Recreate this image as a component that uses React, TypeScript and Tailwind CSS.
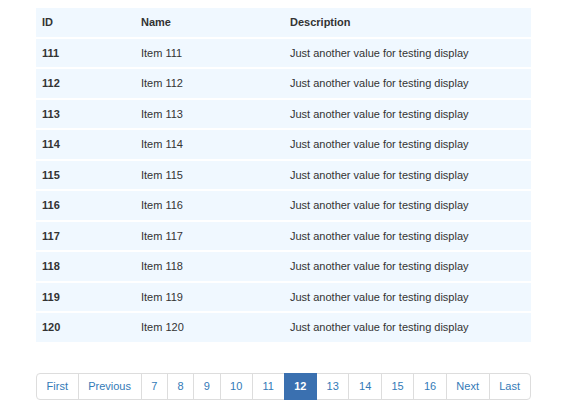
const rows = Array.from({ length: 10 }, (_, i) => 111 + i);

const pages = ["First", "Previous", "7", "8", "9", "10", "11", "12", "13", "14", "15", "16", "Next", "Last"];

export default function App() {
  return (
    <div className="min-h-screen bg-white pt-2 text-[11px] text-[#333] font-['Liberation_Sans',Arial,sans-serif]">
      <div className="ml-[36px] w-[495px]">
        <div className="flex flex-col gap-[2px]">
          <div className="grid h-[28.5px] grid-cols-[99px_149px_1fr] items-center bg-[#f0f8ff] font-bold">
            <div className="px-[6px]">ID</div>
            <div className="px-[6px]">Name</div>
            <div className="px-[6px]">Description</div>
          </div>
          {rows.map((id) => (
            <div key={id} className="grid h-[28.5px] grid-cols-[99px_149px_1fr] items-center bg-[#f0f8ff]">
              <div className="px-[6px] font-bold">{id}</div>
              <div className="px-[6px]">Item {id}</div>
              <div className="px-[6px]">Just another value for testing display</div>
            </div>
          ))}
        </div>

        <div className="mt-[31px] flex w-fit">
          {pages.map((p, i) => {
            const active = p === "12";
            return (
              <a
                key={p}
                href="#"
                className={
                  "flex h-[27px] items-center border px-[9.6px] leading-none " +
                  (i > 0 ? "-ml-px " : "") +
                  (i === 0 ? "rounded-l-[4px] " : "") +
                  (i === pages.length - 1 ? "rounded-r-[4px] " : "") +
                  (active
                    ? "relative z-10 border-[#3a70b0] bg-[#3a70b0] font-bold text-white"
                    : "border-[#ddd] bg-white text-[#337ab7]")
                }
              >
                {p}
              </a>
            );
          })}
        </div>
      </div>
    </div>
  );
}
